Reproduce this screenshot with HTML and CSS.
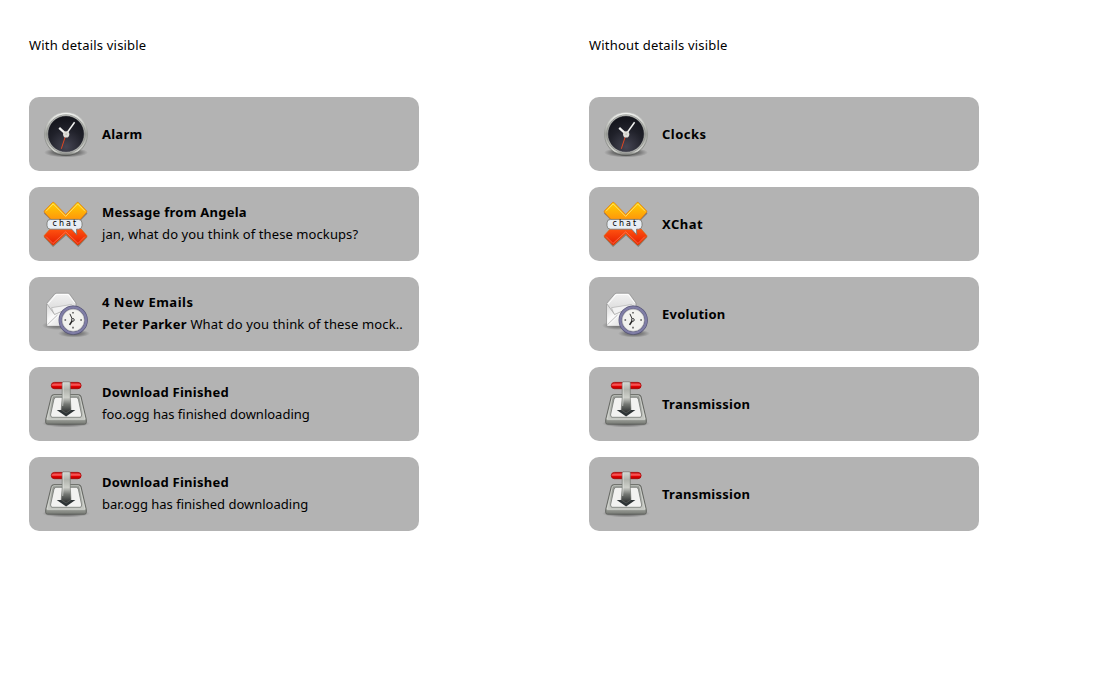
FILE: index.html
```html
<!DOCTYPE html>
<html lang="en">
<head>
<meta charset="utf-8">
<title>Notifications</title>
<link rel="stylesheet" href="styles.css">
</head>
<body>
<svg class="sprites" width="0" height="0" aria-hidden="true">
  <defs>
    <linearGradient id="rim" x1="0" y1="0" x2="0" y2="1"><stop offset="0" stop-color="#f4f5f3"/><stop offset=".5" stop-color="#a0a29d"/><stop offset=".9" stop-color="#d2d3cf"/><stop offset="1" stop-color="#60625f"/></linearGradient>
    <linearGradient id="rim-edge" x1="0" y1="0" x2="0" y2="1"><stop offset="0" stop-color="#c4c5c2"/><stop offset=".6" stop-color="#8b8d88"/><stop offset="1" stop-color="#4c4e4b"/></linearGradient>
    <radialGradient id="dial" cx=".5" cy=".85" r=".8"><stop offset="0" stop-color="#454553"/><stop offset=".6" stop-color="#20212a"/><stop offset="1" stop-color="#13141b"/></radialGradient>
    <radialGradient id="shade"><stop offset="0" stop-color="#000" stop-opacity=".75"/><stop offset=".6" stop-color="#000" stop-opacity=".35"/><stop offset="1" stop-color="#000" stop-opacity="0"/></radialGradient>
    <linearGradient id="gold" x1="0" y1="0" x2="0" y2="1"><stop offset="0" stop-color="#ffd000"/><stop offset=".38" stop-color="#ff9a0a"/><stop offset=".62" stop-color="#ff5410"/><stop offset="1" stop-color="#e51c00"/></linearGradient>
    <linearGradient id="paper" x1="0" y1="0" x2="1" y2="1"><stop offset="0" stop-color="#d6d6d6"/><stop offset=".4" stop-color="#fafafa"/><stop offset="1" stop-color="#d0d0d0"/></linearGradient>
    <linearGradient id="flap" x1="0" y1="0" x2="0" y2="1"><stop offset="0" stop-color="#f3f3f3"/><stop offset="1" stop-color="#c5c5c5"/></linearGradient>
    <linearGradient id="tray" x1="0" y1="0" x2="0" y2="1"><stop offset="0" stop-color="#8b8e89"/><stop offset=".82" stop-color="#c8cac5"/><stop offset=".84" stop-color="#989b95"/><stop offset="1" stop-color="#777a74"/></linearGradient>
    <linearGradient id="stem" x1="0" y1="0" x2="0" y2="1"><stop offset="0" stop-color="#d8dad5"/><stop offset=".25" stop-color="#b0b3ac"/><stop offset=".5" stop-color="#ced0ca"/><stop offset=".72" stop-color="#737672"/><stop offset="1" stop-color="#2a2d2d"/></linearGradient>
    <linearGradient id="bar" x1="0" y1="0" x2="0" y2="1"><stop offset="0" stop-color="#c80000"/><stop offset=".4" stop-color="#ff6464"/><stop offset=".65" stop-color="#e00000"/><stop offset="1" stop-color="#b00000"/></linearGradient>
  </defs>
  <symbol id="clock" viewBox="0 0 60 60">
    <ellipse cx="30" cy="47.500" rx="22" ry="5" fill="url(#shade)"/>
    <circle cx="30" cy="29" r="21.600" fill="url(#rim)" stroke="url(#rim-edge)" stroke-width=".6"/>
    <circle cx="30" cy="29" r="19.200" fill="none" stroke="#8b8e89" stroke-width=".8"/>
    <circle cx="30" cy="29" r="18.300" fill="url(#dial)" stroke="#b4b5b2" stroke-width=".6"/>
    <path d="M30 29.500 25.300 43.800" stroke="#e04722" stroke-width="1"/>
    <path d="M30.500 29.500 23.200 22.800" stroke="#f2f2f0" stroke-width="2.300"/>
    <path d="M29.500 30 38.600 17.300" stroke="#f2f2f0" stroke-width="1.500"/>
    <circle cx="30.200" cy="29.400" r="3.100" fill="#deded9"/>
    <circle cx="30.200" cy="29.200" r="1" fill="#c5c6bf"/>
  </symbol>
  <symbol id="xchat" viewBox="0 0 60 60">
    <path d="M16 8.500h2.500L30 20.700 41 8.500 51.500 18.500 41 29 51.500 42 42.300 52 30 40.500 17 52 7.800 42 19 29 8 18.500Z" fill="#000" opacity=".3"/>
    <path d="M16.700 7.300h1.200L29.700 19.500 41.200 7.300h1L50.800 16v1.200L40.500 28.700 50.800 40.500v1.200L42.500 50h-1.200L29.700 38.700 17.800 50h-1.200L8.200 41.700v-1.200L18.900 28.700 8.200 17.200V16Z" fill="url(#gold)" stroke="#dc6c08" stroke-width=".6"/>
    <path d="M10 16.300 17.200 8.900 29.700 21.400 41.700 8.900 49 16.300" fill="none" stroke="#ffe982" stroke-width=".8"/>
    <path d="M10 41.500 17 48.500 29.700 36.800 42 48.500 49 41.500" fill="none" stroke="#ff8160" stroke-width=".7"/>
    <path d="M14.500 24.400h28q3.500 0 3.500 3.500v2.800q0 3.500-3.500 3.500h-2l.2 5.500-5-5.500H14.500q-3.500 0-3.500-3.500v-2.800q0-3.500 3.500-3.500Z" fill="#e8eef4" stroke="#74736f" stroke-width=".8"/>
  </symbol>
  <symbol id="mail" viewBox="0 0 60 60">
    <ellipse cx="22" cy="40.500" rx="16" ry="4.500" fill="url(#shade)" opacity=".6"/>
    <ellipse cx="38" cy="48.500" rx="16" ry="4" fill="url(#shade)" opacity=".7"/>
    <path d="M10.700 18.300 18.800 8.900 20 8.300H32.300L33.500 8.900 40 18V41H10.700Z" fill="url(#flap)" stroke="#8b8b8b" stroke-width=".7"/>
    <path d="M12 19.300 20.300 9.400H32L38.700 18" fill="none" stroke="#fff" stroke-width=".9"/>
    <path d="M15.500 22.700 35.500 19.500 40 26 27 38 18 29Z" fill="#f2f2f2" stroke="#9c9c9c" stroke-width=".5"/>
    <path d="M11.100 18.900 18.500 29.500 37 22V40.700H11.100Z" fill="url(#paper)"/>
    <path d="M11 19 18.600 29.500 38 21M11.300 40 21.500 30" fill="none" stroke="#9b9b9b" stroke-width=".7"/>
    <path d="M12.300 40 22.500 30.500" stroke="#fff" stroke-width=".8"/>
    <circle cx="37.200" cy="35.200" r="12.800" fill="#f2f2ef" stroke="#555477" stroke-width="3.700"/>
    <circle cx="37.200" cy="35.200" r="12.800" fill="none" stroke="#807ea6" stroke-width="2.400"/>
    <circle cx="37.200" cy="35.200" r="11" fill="none" stroke="#c6c6c3" stroke-width=".7"/>
    <path d="M37 27v1.600M37 41.800v1.600M28.500 34.900h1.600M44.300 34.900h1.600" stroke="#555" stroke-width="1.500"/>
    <path d="M36.700 35 33.900 28.800" stroke="#333" stroke-width="1"/>
    <path d="M36.700 35 33.600 39.900" stroke="#222" stroke-width="1.500"/>
    <circle cx="36.900" cy="34.900" r="1.400" fill="#ddd" stroke="#222" stroke-width=".8"/>
  </symbol>
  <symbol id="transmission" viewBox="0 0 60 60">
    <ellipse cx="30" cy="48.500" rx="24" ry="4" fill="url(#shade)" opacity=".7"/>
    <path d="M17.800 19.700H42.600Q44.500 19.700 45 21.500L50.300 44.500V47.500Q50.300 49.200 48.500 49.200H11.500Q9.700 49.200 9.700 47.500V44.500L15.300 21.500Q15.700 19.700 17.800 19.700Z" fill="url(#tray)" stroke="#5c5f5a" stroke-width=".9"/>
    <path d="M17.500 20.800H42.500L43.900 22 48.900 44.600H11.200L16.300 22Z" fill="none" stroke="#d8dad6" stroke-width=".8"/>
    <path d="M19.800 22.300H40.600L42.300 24 45.700 40 44.700 42.300H15.600L14.500 40 18 24Z" fill="#f2f2f1" stroke="#747773" stroke-width=".8"/>
    <path d="M25.900 35H20.700L30.100 41.500 39.400 35H34.300L33.500 22H26.500Z" fill="#2e3436"/>
    <rect x="15.300" y="7.400" width="29.800" height="6.300" rx="3.150" fill="url(#bar)" stroke="#a40000" stroke-width=".8"/>
    <path d="M26.200 7.800 27 6.800H33.600L34.300 7.800V23L35 34.800 30.100 38 25.200 34.800 26.200 23Z" fill="url(#stem)" stroke="#686b67" stroke-width=".6"/>
    <path d="M27.200 8V22L26.700 31" fill="none" stroke="#e6e7e4" stroke-width=".6"/>
  </symbol>
</svg>
<main class="board">
  <section class="column">
    <h1 class="heading">With details visible</h1>
    <article class="card"><svg class="icon"><use href="#clock"/></svg><div class="copy"><b>Alarm</b></div></article>
    <article class="card"><svg class="icon"><use href="#xchat"/><text class="bubble" x="16.600" y="31.300" textLength="23.500">chat</text></svg><div class="copy detailed"><b>Message from Angela</b><span class="snug">jan, what do you think of these mockups?</span></div></article>
    <article class="card"><svg class="icon"><use href="#mail"/></svg><div class="copy detailed"><b class="wide">4 New Emails</b><div class="preview"><b>Peter Parker</b> <span>What do you think of these mock..</span></div></div></article>
    <article class="card"><svg class="icon"><use href="#transmission"/></svg><div class="copy detailed"><b>Download Finished</b><span class="tight">foo.ogg has finished downloading</span></div></article>
    <article class="card"><svg class="icon"><use href="#transmission"/></svg><div class="copy detailed"><b>Download Finished</b><span class="tight">bar.ogg has finished downloading</span></div></article>
  </section>
  <section class="column">
    <h1 class="heading">Without details visible</h1>
    <article class="card"><svg class="icon"><use href="#clock"/></svg><div class="copy"><b class="wide">Clocks</b></div></article>
    <article class="card"><svg class="icon"><use href="#xchat"/><text class="bubble" x="16.600" y="31.300" textLength="23.500">chat</text></svg><div class="copy"><b class="wide">XChat</b></div></article>
    <article class="card"><svg class="icon"><use href="#mail"/></svg><div class="copy"><b>Evolution</b></div></article>
    <article class="card"><svg class="icon"><use href="#transmission"/></svg><div class="copy"><b>Transmission</b></div></article>
    <article class="card"><svg class="icon"><use href="#transmission"/></svg><div class="copy"><b>Transmission</b></div></article>
  </section>
</main>
</body>
</html>
```
FILE: styles.css
```css
body {
  margin: 0;
  background: #fff;
  color: #000;
  font: 13px/22px "Noto Sans", "Open Sans", sans-serif;
}

.sprites {
  position: absolute;
}

.board {
  display: flex;
  gap: 170px;
  padding: 34px 29px 0;
}

.column {
  display: flex;
  flex-direction: column;
  gap: 16px;
  width: 390px;
}

.heading {
  height: 22px;
  margin: 0 0 25px;
  font-size: 13px;
  font-weight: 400;
  letter-spacing: 0.2px;
}

.card {
  display: flex;
  gap: 6px;
  box-sizing: border-box;
  height: 74px;
  padding: 8px 7px 6px;
  border-radius: 10px;
  background: #b3b3b3;
}

.icon {
  flex: none;
  width: 60px;
  height: 60px;
}

.copy {
  display: flex;
  flex-direction: column;
  justify-content: center;
  align-items: flex-start;
  height: 58px;
  letter-spacing: 0.25px;
  white-space: nowrap;
}

.detailed {
  height: 56px;
}

.wide {
  letter-spacing: 0.5px;
}

.snug {
  letter-spacing: 0.09px;
}

.tight {
  letter-spacing: 0;
}

.preview span {
  letter-spacing: 0.14px;
}

.bubble {
  font: 8px "DejaVu Sans", sans-serif;
  fill: #000;
}
```
